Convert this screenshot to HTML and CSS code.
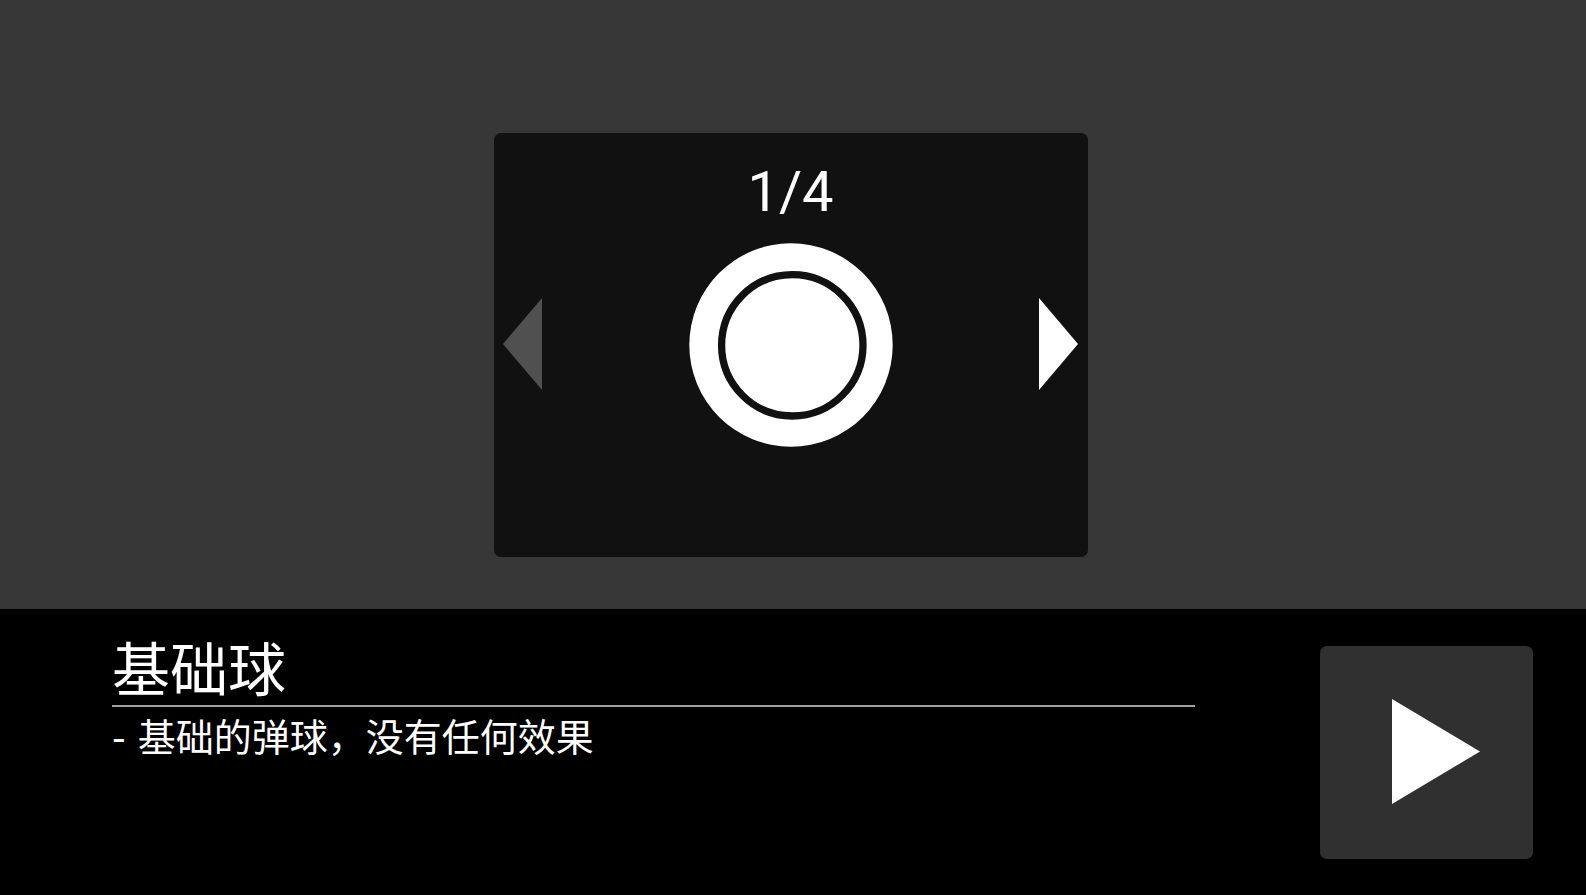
FILE: index.html
```html
<!DOCTYPE html>
<html lang="zh-CN">
<head>
    <meta charset="UTF-8">
    <meta name="viewport" content="width=device-width, initial-scale=1.0">
    <title>基础球</title>
    <link rel="stylesheet" href="styles.css">
</head>
<body>

    <main class="stage">
        <div class="picker">
            <button type="button" class="arrow" aria-label="上一个" disabled>
                <svg width="39" height="92" viewBox="0 0 39 92">
                    <path d="M39 0V92L0 46Z" fill="currentColor"/>
                </svg>
            </button>

            <div class="preview">
                <div class="counter">1/4</div>
                <svg class="ball" width="204" height="204" viewBox="0 0 204 204">
                    <circle cx="102" cy="102" r="101.7" fill="#fff"/>
                    <circle cx="103.3" cy="102.3" r="70.7" fill="none" stroke="#111" stroke-width="7.3"/>
                </svg>
            </div>

            <button type="button" class="arrow" aria-label="下一个">
                <svg width="39" height="92" viewBox="0 0 39 92">
                    <path d="M0 0V92L39 46Z" fill="currentColor"/>
                </svg>
            </button>
        </div>
    </main>

    <footer class="panel">
        <div class="info">
            <h1>基础球</h1>
            <p>- 基础的弹球，没有任何效果</p>
        </div>
        <button type="button" class="play" aria-label="开始">
            <svg width="213" height="213" viewBox="0 0 213 213">
                <path d="M72 53V158L160 105.5Z" fill="#fff"/>
            </svg>
        </button>
    </footer>

</body>
</html>
```

FILE: styles.css
```css
* {
    box-sizing: border-box;
}

body {
    font-family: "Noto Sans CJK SC", sans-serif;
    background-color: #373737;
    color: #fff;
    margin: 0;
    min-height: 100vh;
    display: flex;
    flex-direction: column;
}

button {
    padding: 0;
    border: none;
    background: none;
    cursor: pointer;
}

svg {
    display: block;
}

.stage {
    flex: 1;
    display: flex;
    justify-content: center;
    align-items: flex-end;
    padding: 40px 4px 52px 0;
}

.picker {
    background-color: #111;
    width: 594px;
    max-width: 100%;
    padding: 0 10px 0 9px;
    border-radius: 7px;
    display: flex;
    justify-content: space-between;
    align-items: center;
}

.arrow {
    color: #fff;
    margin-bottom: 2px;
}

.arrow:disabled {
    color: #505050;
    cursor: default;
}

.preview {
    padding: 8px 0 110px;
    text-align: center;
}

.counter {
    font-family: Roboto, sans-serif;
    font-size: 56px;
    line-height: 102px;
}

.panel {
    background-color: #000;
    display: flex;
    align-items: flex-start;
    gap: 125px;
    padding: 37px 53px 36px 112px;
}

.info {
    flex: 1;
}

.info h1 {
    margin: 0;
    padding-bottom: 18px;
    border-bottom: 2px solid #a0a0a0;
    font-size: 58px;
    font-weight: normal;
    line-height: 41px;
}

.info p {
    margin: 8px 0 0;
    font-family: "DejaVu Sans", "Noto Sans CJK SC", sans-serif;
    font-size: 38px;
    line-height: 46px;
}

.play {
    background-color: #303030;
    border-radius: 7px;
}

.play:hover {
    background-color: #3c3c3c;
}
```
